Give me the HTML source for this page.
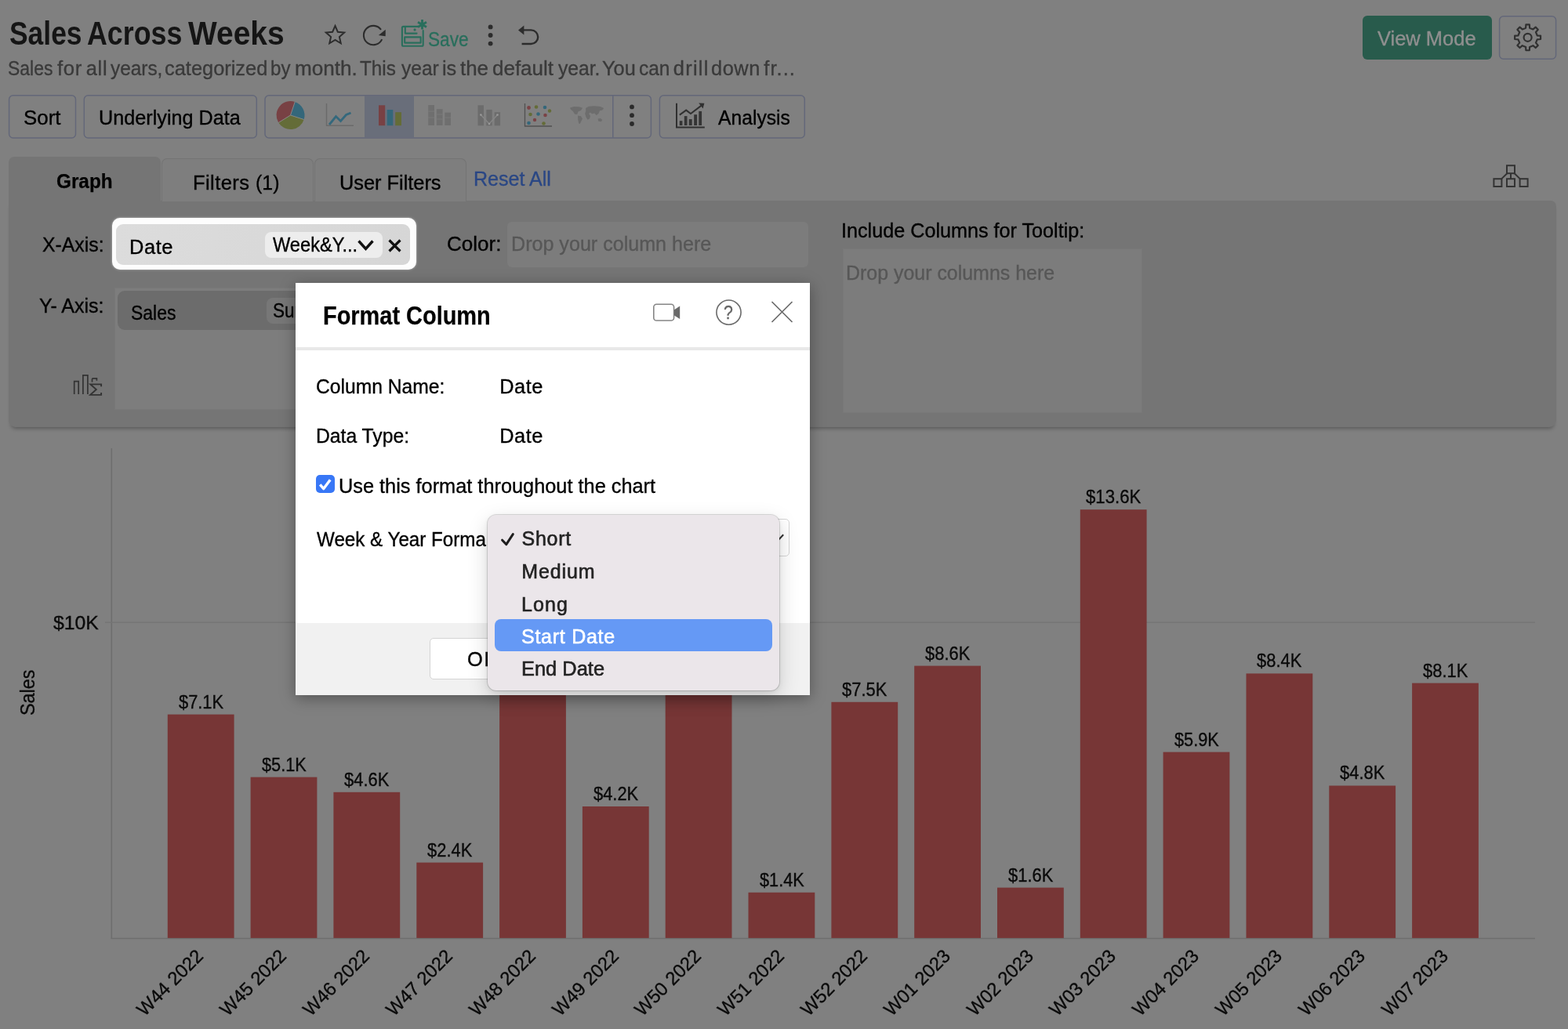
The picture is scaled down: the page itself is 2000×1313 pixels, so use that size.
<!DOCTYPE html>
<html lang="en"><head><meta charset="utf-8"><title>Sales Across Weeks</title>
<style>
*{box-sizing:border-box;margin:0;padding:0}
html,body{width:2000px;height:1313px;overflow:hidden;background:#808080}
body{position:relative;font-family:"Liberation Sans",sans-serif;color:#000}
.a{position:absolute}
.t{position:absolute;white-space:nowrap;line-height:normal;transform-origin:0 0}
svg{position:absolute;overflow:visible}
#root{position:absolute;left:0;top:0;width:2000px;height:1313px;will-change:transform}

</style></head>
<body>
<div id="root">
<div class="a" style="left:0;top:0"><div class="t" style="left:11.83px;top:19.00px;font-size:42px;transform:scaleX(0.8429);color:#151515;font-weight:700;">Sales</div> <div class="t" style="left:111.14px;top:19.00px;font-size:42px;transform:scaleX(0.8526);color:#151515;font-weight:700;">Across</div> <div class="t" style="left:240.02px;top:19.00px;font-size:42px;transform:scaleX(0.9265);color:#151515;font-weight:700;">Weeks</div></div>
<div class="a" style="left:0;top:0"><div class="t" style="left:10.40px;top:73.00px;font-size:25.4px;transform:scaleX(0.9028);color:#3a3a3a;-webkit-text-stroke:0.35px #3a3a3a;">Sales</div> <div class="t" style="left:73.45px;top:73.00px;font-size:25.4px;transform:scaleX(1.0141);color:#3a3a3a;letter-spacing:0.591px;-webkit-text-stroke:0.35px #3a3a3a;">for</div> <div class="t" style="left:109.71px;top:73.00px;font-size:25.4px;transform:scaleX(1.0000);color:#3a3a3a;letter-spacing:0.778px;-webkit-text-stroke:0.35px #3a3a3a;">all</div> <div class="t" style="left:141.24px;top:73.00px;font-size:25.4px;transform:scaleX(0.9595);color:#3a3a3a;-webkit-text-stroke:0.35px #3a3a3a;">years,</div> <div class="t" style="left:210.30px;top:73.00px;font-size:25.4px;transform:scaleX(1.0004);color:#3a3a3a;-webkit-text-stroke:0.35px #3a3a3a;">categorized</div> <div class="t" style="left:345.27px;top:73.00px;font-size:25.4px;transform:scaleX(0.9474);color:#3a3a3a;-webkit-text-stroke:0.35px #3a3a3a;">by</div> <div class="t" style="left:376.17px;top:73.00px;font-size:25.4px;transform:scaleX(1.0289);color:#3a3a3a;-webkit-text-stroke:0.35px #3a3a3a;">month.</div> <div class="t" style="left:459.41px;top:73.00px;font-size:25.4px;transform:scaleX(0.9569);color:#3a3a3a;-webkit-text-stroke:0.35px #3a3a3a;">This</div> <div class="t" style="left:511.70px;top:73.00px;font-size:25.4px;transform:scaleX(0.9658);color:#3a3a3a;-webkit-text-stroke:0.35px #3a3a3a;">year</div> <div class="t" style="left:563.80px;top:73.00px;font-size:25.4px;transform:scaleX(0.9939);color:#3a3a3a;-webkit-text-stroke:0.35px #3a3a3a;">is</div> <div class="t" style="left:587.00px;top:73.00px;font-size:25.4px;transform:scaleX(1.0210);color:#3a3a3a;-webkit-text-stroke:0.35px #3a3a3a;">the</div> <div class="t" style="left:627.89px;top:73.00px;font-size:25.4px;transform:scaleX(1.0231);color:#3a3a3a;-webkit-text-stroke:0.35px #3a3a3a;">default</div> <div class="t" style="left:711.62px;top:73.00px;font-size:25.4px;transform:scaleX(0.9710);color:#3a3a3a;-webkit-text-stroke:0.35px #3a3a3a;">year.</div> <div class="t" style="left:768.27px;top:73.00px;font-size:25.4px;transform:scaleX(0.9972);color:#3a3a3a;-webkit-text-stroke:0.35px #3a3a3a;">You</div> <div class="t" style="left:815.19px;top:73.00px;font-size:25.4px;transform:scaleX(0.9634);color:#3a3a3a;-webkit-text-stroke:0.35px #3a3a3a;">can</div> <div class="t" style="left:858.81px;top:73.00px;font-size:25.4px;transform:scaleX(1.0000);color:#3a3a3a;letter-spacing:1.264px;-webkit-text-stroke:0.35px #3a3a3a;">drill</div> <div class="t" style="left:906.91px;top:73.00px;font-size:25.4px;transform:scaleX(1.0000);color:#3a3a3a;letter-spacing:0.599px;-webkit-text-stroke:0.35px #3a3a3a;">down</div> <div class="t" style="left:974.36px;top:73.00px;font-size:25.4px;transform:scaleX(1.0000);color:#3a3a3a;letter-spacing:1.052px;-webkit-text-stroke:0.35px #3a3a3a;">fr...</div></div>
<svg style="left:408px;top:20px" width="290" height="50" viewBox="408 20 290 50" fill="none" stroke="#2c2c2c" stroke-width="2.1" stroke-linejoin="round" stroke-linecap="round">
<path d="M427.50 33.00 L430.85 40.69 L439.20 41.50 L432.92 47.06 L434.73 55.25 L427.50 51.00 L420.27 55.25 L422.08 47.06 L415.80 41.50 L424.15 40.69 Z" stroke-linejoin="miter" stroke-width="2"/>
<path d="M487.2 50.15 A12.2 12.2 0 1 1 486.0 37.9" stroke-linecap="butt"/>
<path d="M482.9 44.9 L491.8 37.8 L491.7 46.2 Z" fill="#2c2c2c" stroke="none"/>
<g stroke="#296e5c" stroke-width="2.1">
<path d="M533 33.9 H514.4 Q512.9 33.9 512.9 35.4 V57.2 Q512.9 58.7 514.4 58.7 H538.2 Q539.7 58.7 539.7 57.2 V39"/>
<path d="M516.8 34 V42.6 H531.6"/>
<rect x="516.2" y="47.4" width="20.4" height="7.2"/>
<path d="M528.3 37.2 h1.5 v1.5 h-1.5 z" fill="#296e5c" stroke-width="1.4"/>
<path d="M538.5 25 V37.6 M533 28.2 L544 34.4 M544 28.2 L533 34.4" stroke-width="2.9" stroke-linecap="butt"/>
</g>
<g fill="#2c2c2c" stroke="none"><circle cx="625.6" cy="34.4" r="2.95"/><circle cx="625.6" cy="45" r="2.95"/><circle cx="625.6" cy="55.6" r="2.95"/></g>
<path d="M667 38.4 H677.4 A8.8 8.8 0 0 1 677.4 56 H665.6" stroke-width="2.4" stroke-linecap="butt"/>
<path d="M661 38.4 L668.4 32.6 V44.4 Z" fill="#2c2c2c" stroke="none"/>
</svg>
<div class="t" style="left:546.29px;top:36.00px;font-size:25.4px;transform:scaleX(0.8917);color:#296e5c;-webkit-text-stroke:0.35px #296e5c;">Save</div>
<div class="a" style="left:1737.6px;top:20px;width:165px;height:55.7px;background:#285b4c;border-radius:6px"></div>
<div class="t" style="left:1757.03px;top:35.00px;font-size:25.4px;transform:scaleX(1.0035);color:#8f8f8f;-webkit-text-stroke:0.35px #8f8f8f;">View Mode</div>
<svg style="left:1925px;top:25px" width="48" height="46" viewBox="1925 25 48 46" fill="none" stroke="#303030" stroke-width="2.2" stroke-linejoin="round"><path d="M1946.09 35.66 L1946.39 31.35 L1950.81 31.35 L1951.11 35.66 L1955.41 37.44 L1958.67 34.60 L1961.80 37.73 L1958.96 40.99 L1960.74 45.29 L1965.05 45.59 L1965.05 50.01 L1960.74 50.31 L1958.96 54.61 L1961.80 57.87 L1958.67 61.00 L1955.41 58.16 L1951.11 59.94 L1950.81 64.25 L1946.39 64.25 L1946.09 59.94 L1941.79 58.16 L1938.53 61.00 L1935.40 57.87 L1938.24 54.61 L1936.46 50.31 L1932.15 50.01 L1932.15 45.59 L1936.46 45.29 L1938.24 40.99 L1935.40 37.73 L1938.53 34.60 L1941.79 37.44 Z"/><circle cx="1948.6" cy="47.8" r="5"/></svg>
<svg style="left:1900px;top:205px" width="56" height="40" viewBox="1900 205 56 40" fill="none" stroke="#333" stroke-width="2">
<rect x="1922" y="211.2" width="10" height="10"/><rect x="1905.4" y="228.2" width="10" height="9.8"/><rect x="1922" y="228.2" width="10" height="9.8"/><rect x="1938.6" y="228.2" width="10" height="9.8"/>
<path d="M1927 221.2 V228 M1922.6 221 L1915 228.4 M1931.4 221 L1939 228.4"/></svg>
<svg style="left:0;top:0" width="2000" height="200" viewBox="0 0 2000 200"><rect x="465" y="122.4" width="63" height="52.8" fill="#696e7a"/><rect x="11.6" y="121.7" width="84.90" height="54.20" rx="5" fill="none" stroke="#636779" stroke-width="1.5"/><rect x="107.3" y="121.7" width="220.00" height="54.20" rx="5" fill="none" stroke="#636779" stroke-width="1.5"/><rect x="338.0" y="121.7" width="492.40" height="54.20" rx="5" fill="none" stroke="#636779" stroke-width="1.5"/><path d="M781.8 122 V175.6" stroke="#636779" stroke-width="1.5" fill="none"/><rect x="841.4" y="121.7" width="184.90" height="54.20" rx="5" fill="none" stroke="#636779" stroke-width="1.5"/><rect x="1912.6" y="20.7" width="72.00" height="54.50" rx="5" fill="none" stroke="#636779" stroke-width="1.5"/></svg>
<div class="t" style="left:30.30px;top:136.00px;font-size:25.4px;transform:scaleX(1.0188);color:#000;-webkit-text-stroke:0.35px #000;">Sort</div>
<div class="t" style="left:125.92px;top:136.00px;font-size:25.4px;transform:scaleX(0.9933);color:#000;-webkit-text-stroke:0.35px #000;">Underlying Data</div>
<div class="t" style="left:915.72px;top:136.00px;font-size:25.4px;transform:scaleX(0.9721);color:#000;-webkit-text-stroke:0.35px #000;">Analysis</div>
<svg style="left:345px;top:125px" width="480" height="48" viewBox="345 125 480 48">
<g>
<path d="M370.5 147 L376.2 130 A18 18 0 0 1 387.7 152.5 Z" fill="#34677a"/>
<path d="M370.5 147 L387.7 152.5 A18 18 0 0 1 355.2 156.5 Z" fill="#646c38"/>
<path d="M370.5 147 L355.2 156.5 A18 18 0 0 1 376.2 130 Z" fill="#784144"/>
<path d="M370.5 147 L376.2 130 M370.5 147 L387.7 152.5 M370.5 147 L355.2 156.5" stroke="#8a8a8a" stroke-width="0.9"/>
</g>
<path d="M416.5 132 V160.3 H451" fill="none" stroke="#6a6a6a" stroke-width="1.4"/>
<path d="M420 159 L428.5 148.5 L434.5 154.5 L441.5 146.5 L447.5 144" fill="none" stroke="#34687c" stroke-width="2.8" stroke-linejoin="miter"/>
<rect x="483" y="134.3" width="8.2" height="25.9" fill="#784144"/><rect x="493.7" y="140" width="7.6" height="20.2" fill="#34677a"/><rect x="504.2" y="143.2" width="7.8" height="17" fill="#646c38"/>
<g fill="#6f6f6f">
<rect x="546.2" y="134" width="7.8" height="26"/><rect x="556.8" y="139.2" width="7.8" height="20.8"/><rect x="567.2" y="143.6" width="7.8" height="16.4"/>
</g><g fill="#6c6c6c">
<rect x="609.5" y="134.3" width="7.5" height="26"/><rect x="620.3" y="139.9" width="7.4" height="20.4"/><rect x="630.7" y="143.2" width="7.4" height="17.1"/>
</g>
<g stroke="#7a7a7a" stroke-width="1"><path d="M546.2 142 h7.8 M546.2 150 h7.8 M556.8 146 h7.8 M556.8 152 h7.8 M567.2 150 h7.8" fill="none"/></g>
<path d="M613.3 146.5 L624 158 L634.5 146.5" fill="none" stroke="#868686" stroke-width="1.5"/>
<g fill="#9a9a9a"><circle cx="613.3" cy="146.5" r="1.3"/><circle cx="624" cy="158" r="1.3"/><circle cx="634.5" cy="146.5" r="1.3"/></g>
<path d="M669.5 132 V161 H704" fill="none" stroke="#505050" stroke-width="1.3"/>
<g>
<circle cx="674.5" cy="137.5" r="2.4" fill="#7a4346"/><circle cx="684" cy="136.5" r="2.3" fill="#646c38"/><circle cx="695" cy="137" r="2.3" fill="#34677a"/>
<circle cx="701" cy="141.5" r="2.2" fill="#646c38"/><circle cx="676.5" cy="146" r="2.3" fill="#646c38"/><circle cx="686.5" cy="145.5" r="2.3" fill="#34677a"/>
<circle cx="695.5" cy="147" r="2.3" fill="#7a4346"/><circle cx="682" cy="153" r="2.2" fill="#7a4346"/><circle cx="674.5" cy="157" r="2.3" fill="#34677a"/>
<circle cx="693.5" cy="157.5" r="2.3" fill="#646c38"/>
</g>
<g fill="#6d6d6d">
<path d="M727 137.5 l5 -1.6 l6.5 0.4 l4.5 1.5 l-1.8 3 l-3.8 1.6 l-1.2 3.6 l-3 -0.2 l-2.4 -3.8 l-2.8 -2.2 z"/>
<path d="M737 147.5 l4 0.8 l2 3.2 l-1.6 3.2 l-1.6 3.2 l-1.6 -0.4 l-1 -5 z"/>
<path d="M747 138 l4 -2.2 l7 -0.6 l8 0.8 l4.2 2 l-1.8 2.6 l-3.4 0.6 l-1.4 3.6 l-3 2.4 l-2.2 -2.6 l-3.2 0.6 l-2.6 -1.8 l-1.4 1.6 l1.8 3 l-1 3.6 l-2.6 1.2 l-2 -3.6 l-1.2 -4.2 l1 -3.6 z"/>
<path d="M762.5 151.5 l3.6 -0.6 l2.2 2.2 l-1.6 2.2 l-3.4 -0.6 z"/>
</g>
<g fill="#2a2a2a"><circle cx="806" cy="136.4" r="2.9"/><circle cx="806" cy="147.2" r="2.9"/><circle cx="806" cy="158" r="2.9"/></g>
<g fill="none" stroke="#303030" stroke-width="2">
<path d="M863 131.8 V162.6 H898.8"/>
<path d="M866.8 146.6 L875.2 140.6 L881 145 L895 134.4"/>
</g>
<path d="M891.2 131.6 L898.4 131.8 L896.6 138.6 Z" fill="#303030"/>
<g fill="#343434"><rect x="866.8" y="154.2" width="3.6" height="5.8"/><rect x="872.8" y="148.1" width="3.7" height="11.9"/><rect x="878.8" y="152.1" width="3.9" height="7.9"/><rect x="885.2" y="146.2" width="3.9" height="13.8"/><rect x="891.3" y="141.9" width="3.8" height="18.1"/></g>
</svg>
<div class="a" style="left:11px;top:256.3px;width:1974.2px;height:288.7px;background:#757575;border-radius:0 7px 9px 9px;box-shadow:0 5px 5px -3px rgba(0,0,0,.3)"></div>
<div class="a" style="left:11px;top:200px;width:194px;height:60px;background:#757575;border-radius:7px 7px 0 0"></div>
<div class="a" style="left:206px;top:202px;width:193.5px;height:54.5px;background:#7e7e7e;border:1.5px solid #737373;border-bottom:none;border-radius:7px 7px 0 0"></div>
<div class="a" style="left:400.5px;top:202px;width:194px;height:54.5px;background:#7e7e7e;border:1.5px solid #737373;border-bottom:none;border-radius:7px 7px 0 0"></div>
<div class="t" style="left:72.30px;top:216.00px;font-size:26px;transform:scaleX(0.9350);color:#000;font-weight:700;-webkit-text-stroke:0.25px #000;">Graph</div>
<div class="a" style="left:0;top:0"><div class="t" style="left:245.94px;top:219.00px;font-size:25.4px;transform:scaleX(1.0016);color:#000;letter-spacing:0.439px;-webkit-text-stroke:0.35px #000;">Filters</div> <div class="t" style="left:325.98px;top:219.00px;font-size:25.4px;transform:scaleX(0.9806);color:#000;-webkit-text-stroke:0.35px #000;">(1)</div></div>
<div class="t" style="left:432.72px;top:219.00px;font-size:25.4px;transform:scaleX(0.9981);color:#000;-webkit-text-stroke:0.35px #000;">User Filters</div>
<div class="t" style="left:603.76px;top:214.00px;font-size:25.4px;transform:scaleX(0.9864);color:#2a4784;-webkit-text-stroke:0.35px #2a4784;">Reset All</div>
<div class="t" style="left:53.92px;top:298.00px;font-size:25.4px;transform:scaleX(0.9765);color:#000;-webkit-text-stroke:0.35px #000;">X-Axis:</div>
<div class="a" style="left:143px;top:278.3px;width:388.3px;height:66px;background:#fdfdfd;border-radius:10px;box-shadow:0 0 3px rgba(255,255,255,.5)"></div>
<div class="a" style="left:148.3px;top:286.4px;width:374.4px;height:51.2px;background:linear-gradient(100deg,#dcdcdc,#d6d6d6);border-radius:9px"></div>
<div class="a" style="left:338px;top:296px;width:150px;height:32.5px;background:#ededed;border-radius:8px"></div>
<div class="t" style="left:165.33px;top:301.00px;font-size:25.4px;transform:scaleX(1.0027);color:#000;letter-spacing:0.554px;-webkit-text-stroke:0.35px #000;">Date</div>
<div class="t" style="left:348.00px;top:298.00px;font-size:25.4px;transform:scaleX(0.9302);color:#000;-webkit-text-stroke:0.35px #000;">Week&amp;Y...</div>
<svg style="left:455px;top:300px" width="70" height="28" viewBox="455 300 70 28" fill="none" stroke="#111" stroke-width="3.4"><path d="M457.5 307.5 L466.5 317.5 L475.5 307.5"/><path d="M496.5 306.5 L510.5 320.5 M510.5 306.5 L496.5 320.5" stroke-width="3.2"/></svg>
<div class="t" style="left:569.94px;top:297.00px;font-size:25.4px;transform:scaleX(1.0257);color:#000;-webkit-text-stroke:0.35px #000;">Color:</div>
<div class="a" style="left:647px;top:283px;width:383.5px;height:58px;background:#7c7c7c;border-radius:6px"></div>
<div class="t" style="left:651.64px;top:297.00px;font-size:25.4px;transform:scaleX(0.9885);color:#575757;-webkit-text-stroke:0.35px #575757;">Drop your column here</div>
<div class="t" style="left:1072.88px;top:280.00px;font-size:25.4px;transform:scaleX(0.9918);color:#000;-webkit-text-stroke:0.35px #000;">Include Columns for Tooltip:</div>
<div class="a" style="left:1075px;top:317px;width:382px;height:210px;background:#7c7c7c;border:1px solid #787878"></div>
<div class="t" style="left:1079.05px;top:334.00px;font-size:25.4px;transform:scaleX(0.9819);color:#575757;-webkit-text-stroke:0.35px #575757;">Drop your columns here</div>
<div class="t" style="left:49.98px;top:376.00px;font-size:25.4px;transform:scaleX(0.9848);color:#000;-webkit-text-stroke:0.35px #000;">Y- Axis:</div>
<div class="a" style="left:146px;top:367px;width:884px;height:155.5px;background:#7d7d7d;border:1px solid #787878"></div>
<div class="a" style="left:150px;top:370.5px;width:377px;height:50.5px;background:#6c6c6c;border-radius:9px"></div>
<div class="a" style="left:340px;top:380px;width:150px;height:32.5px;background:#777;border-radius:8px"></div>
<div class="t" style="left:167.27px;top:385.00px;font-size:25.4px;transform:scaleX(0.9042);color:#000;-webkit-text-stroke:0.35px #000;">Sales</div>
<div class="t" style="left:348.19px;top:381.00px;font-size:26px;transform:scaleX(0.8665);color:#000;-webkit-text-stroke:0.35px #000;">Sum</div>
<svg style="left:90px;top:474px" width="44" height="36" viewBox="90 474 44 36" fill="none" stroke="#333" stroke-width="1.7">
<path d="M94.7 503 V486.7 H100.2 V503"/><path d="M105.9 503 V478.8 H111.9 V503"/>
<path d="M117.5 487.6 V484 Q117.5 482.9 118.6 482.9 H123.4 V485.8"/>
<path d="M129.1 493.2 V490.4 H115.4 L122.8 497 L115.2 503.9 H129.1 V501" stroke-width="1.9"/></svg><svg style="left:0;top:560px" width="2000" height="753" viewBox="0 560 2000 753">
<g stroke="#6e6e6e" stroke-width="1.6" fill="none"><path d="M142.3 572 V1197.4"/><path d="M141.5 1197.5 H1958"/></g>
<path d="M134 794.2 H1958" stroke="#757575" stroke-width="1.4" fill="none"/>
<rect x="213.8" y="911.6" width="84.8" height="285.3" fill="#773636"/>
<rect x="319.6" y="991.6" width="84.8" height="205.3" fill="#773636"/>
<rect x="425.4" y="1010.8" width="84.8" height="186.1" fill="#773636"/>
<rect x="531.3" y="1100.6" width="84.8" height="96.3" fill="#773636"/>
<rect x="637.1" y="803.0" width="84.8" height="393.9" fill="#773636"/>
<rect x="742.9" y="1029.0" width="84.8" height="167.9" fill="#773636"/>
<rect x="848.7" y="819.0" width="84.8" height="377.9" fill="#773636"/>
<rect x="954.5" y="1138.8" width="84.8" height="58.1" fill="#773636"/>
<rect x="1060.4" y="895.8" width="84.8" height="301.1" fill="#773636"/>
<rect x="1166.2" y="849.6" width="84.8" height="347.3" fill="#773636"/>
<rect x="1272.0" y="1132.6" width="84.8" height="64.3" fill="#773636"/>
<rect x="1377.8" y="650.2" width="84.8" height="546.7" fill="#773636"/>
<rect x="1483.6" y="959.6" width="84.8" height="237.3" fill="#773636"/>
<rect x="1589.5" y="859.4" width="84.8" height="337.5" fill="#773636"/>
<rect x="1695.3" y="1002.5" width="84.8" height="194.4" fill="#773636"/>
<rect x="1801.1" y="871.6" width="84.8" height="325.3" fill="#773636"/>
</svg>
<div class="t" style="left:228.03px;top:882.00px;font-size:24px;transform:scaleX(0.9100);color:#0a0a0a;-webkit-text-stroke:0.35px #0a0a0a;">$7.1K</div>
<div class="t" style="left:333.97px;top:962.00px;font-size:24px;transform:scaleX(0.9046);color:#0a0a0a;-webkit-text-stroke:0.35px #0a0a0a;">$5.1K</div>
<div class="t" style="left:439.37px;top:981.00px;font-size:24px;transform:scaleX(0.9135);color:#0a0a0a;-webkit-text-stroke:0.35px #0a0a0a;">$4.6K</div>
<div class="t" style="left:545.01px;top:1071.00px;font-size:24px;transform:scaleX(0.9133);color:#0a0a0a;-webkit-text-stroke:0.35px #0a0a0a;">$2.4K</div>
<div class="t" style="left:757.15px;top:999.00px;font-size:24px;transform:scaleX(0.9119);color:#0a0a0a;-webkit-text-stroke:0.35px #0a0a0a;">$4.2K</div>
<div class="t" style="left:968.89px;top:1109.00px;font-size:24px;transform:scaleX(0.9046);color:#0a0a0a;-webkit-text-stroke:0.35px #0a0a0a;">$1.4K</div>
<div class="t" style="left:1074.12px;top:866.00px;font-size:24px;transform:scaleX(0.9135);color:#0a0a0a;-webkit-text-stroke:0.35px #0a0a0a;">$7.5K</div>
<div class="t" style="left:1180.26px;top:820.00px;font-size:24px;transform:scaleX(0.9135);color:#0a0a0a;-webkit-text-stroke:0.35px #0a0a0a;">$8.6K</div>
<div class="t" style="left:1286.40px;top:1103.00px;font-size:24px;transform:scaleX(0.9135);color:#0a0a0a;-webkit-text-stroke:0.35px #0a0a0a;">$1.6K</div>
<div class="t" style="left:1385.45px;top:620.00px;font-size:24px;transform:scaleX(0.9241);color:#0a0a0a;-webkit-text-stroke:0.35px #0a0a0a;">$13.6K</div>
<div class="t" style="left:1497.99px;top:930.00px;font-size:24px;transform:scaleX(0.9046);color:#0a0a0a;-webkit-text-stroke:0.35px #0a0a0a;">$5.9K</div>
<div class="t" style="left:1603.43px;top:829.00px;font-size:24px;transform:scaleX(0.9135);color:#0a0a0a;-webkit-text-stroke:0.35px #0a0a0a;">$8.4K</div>
<div class="t" style="left:1709.08px;top:972.00px;font-size:24px;transform:scaleX(0.9133);color:#0a0a0a;-webkit-text-stroke:0.35px #0a0a0a;">$4.8K</div>
<div class="t" style="left:1815.01px;top:842.00px;font-size:24px;transform:scaleX(0.9135);color:#0a0a0a;-webkit-text-stroke:0.35px #0a0a0a;">$8.1K</div>
<div class="t" style="left:68.24px;top:781.00px;font-size:24px;transform:scaleX(1.0309);color:#0a0a0a;-webkit-text-stroke:0.35px #0a0a0a;">$10K</div>
<div class="a" style="left:34.2px;top:884px;width:0;height:0;transform:rotate(-90deg)"><div class="t" style="left:-29.23px;top:-14.00px;font-size:26px;transform:scaleX(0.8989);color:#0a0a0a;-webkit-text-stroke:0.35px #0a0a0a;">Sales</div></div>
<div class="a" style="left:260.4px;top:1221.6px;width:0;height:0;transform:rotate(-45deg)"><div class="t" style="left:-107.00px;top:-22.00px;font-size:24px;transform:scaleX(0.9868);color:#0a0a0a;-webkit-text-stroke:0.35px #0a0a0a;">W44 2022</div></div>
<div class="a" style="left:366.2px;top:1221.6px;width:0;height:0;transform:rotate(-45deg)"><div class="t" style="left:-107.00px;top:-22.00px;font-size:24px;transform:scaleX(0.9868);color:#0a0a0a;-webkit-text-stroke:0.35px #0a0a0a;">W45 2022</div></div>
<div class="a" style="left:472.0px;top:1221.6px;width:0;height:0;transform:rotate(-45deg)"><div class="t" style="left:-107.00px;top:-22.00px;font-size:24px;transform:scaleX(0.9868);color:#0a0a0a;-webkit-text-stroke:0.35px #0a0a0a;">W46 2022</div></div>
<div class="a" style="left:577.9px;top:1221.6px;width:0;height:0;transform:rotate(-45deg)"><div class="t" style="left:-107.00px;top:-22.00px;font-size:24px;transform:scaleX(0.9868);color:#0a0a0a;-webkit-text-stroke:0.35px #0a0a0a;">W47 2022</div></div>
<div class="a" style="left:683.7px;top:1221.6px;width:0;height:0;transform:rotate(-45deg)"><div class="t" style="left:-107.00px;top:-22.00px;font-size:24px;transform:scaleX(0.9868);color:#0a0a0a;-webkit-text-stroke:0.35px #0a0a0a;">W48 2022</div></div>
<div class="a" style="left:789.5px;top:1221.6px;width:0;height:0;transform:rotate(-45deg)"><div class="t" style="left:-107.00px;top:-22.00px;font-size:24px;transform:scaleX(0.9868);color:#0a0a0a;-webkit-text-stroke:0.35px #0a0a0a;">W49 2022</div></div>
<div class="a" style="left:895.3px;top:1221.6px;width:0;height:0;transform:rotate(-45deg)"><div class="t" style="left:-107.00px;top:-22.00px;font-size:24px;transform:scaleX(0.9868);color:#0a0a0a;-webkit-text-stroke:0.35px #0a0a0a;">W50 2022</div></div>
<div class="a" style="left:1001.1px;top:1221.6px;width:0;height:0;transform:rotate(-45deg)"><div class="t" style="left:-107.00px;top:-22.00px;font-size:24px;transform:scaleX(0.9868);color:#0a0a0a;-webkit-text-stroke:0.35px #0a0a0a;">W51 2022</div></div>
<div class="a" style="left:1107.0px;top:1221.6px;width:0;height:0;transform:rotate(-45deg)"><div class="t" style="left:-107.00px;top:-22.00px;font-size:24px;transform:scaleX(0.9868);color:#0a0a0a;-webkit-text-stroke:0.35px #0a0a0a;">W52 2022</div></div>
<div class="a" style="left:1212.8px;top:1221.6px;width:0;height:0;transform:rotate(-45deg)"><div class="t" style="left:-107.00px;top:-22.00px;font-size:24px;transform:scaleX(0.9868);color:#0a0a0a;-webkit-text-stroke:0.35px #0a0a0a;">W01 2023</div></div>
<div class="a" style="left:1318.6px;top:1221.6px;width:0;height:0;transform:rotate(-45deg)"><div class="t" style="left:-107.00px;top:-22.00px;font-size:24px;transform:scaleX(0.9868);color:#0a0a0a;-webkit-text-stroke:0.35px #0a0a0a;">W02 2023</div></div>
<div class="a" style="left:1424.4px;top:1221.6px;width:0;height:0;transform:rotate(-45deg)"><div class="t" style="left:-107.00px;top:-22.00px;font-size:24px;transform:scaleX(0.9868);color:#0a0a0a;-webkit-text-stroke:0.35px #0a0a0a;">W03 2023</div></div>
<div class="a" style="left:1530.2px;top:1221.6px;width:0;height:0;transform:rotate(-45deg)"><div class="t" style="left:-107.00px;top:-22.00px;font-size:24px;transform:scaleX(0.9868);color:#0a0a0a;-webkit-text-stroke:0.35px #0a0a0a;">W04 2023</div></div>
<div class="a" style="left:1636.1px;top:1221.6px;width:0;height:0;transform:rotate(-45deg)"><div class="t" style="left:-107.00px;top:-22.00px;font-size:24px;transform:scaleX(0.9868);color:#0a0a0a;-webkit-text-stroke:0.35px #0a0a0a;">W05 2023</div></div>
<div class="a" style="left:1741.9px;top:1221.6px;width:0;height:0;transform:rotate(-45deg)"><div class="t" style="left:-107.00px;top:-22.00px;font-size:24px;transform:scaleX(0.9868);color:#0a0a0a;-webkit-text-stroke:0.35px #0a0a0a;">W06 2023</div></div>
<div class="a" style="left:1847.7px;top:1221.6px;width:0;height:0;transform:rotate(-45deg)"><div class="t" style="left:-107.00px;top:-22.00px;font-size:24px;transform:scaleX(0.9868);color:#0a0a0a;-webkit-text-stroke:0.35px #0a0a0a;">W07 2023</div></div><div class="a" style="left:377px;top:361px;width:656.3px;height:526px;background:#fff;box-shadow:0 4px 18px rgba(0,0,0,.35);overflow:hidden">
<div class="a" style="left:0;top:82.4px;width:100%;height:3.6px;background:#e8e8e8"></div>
<div class="a" style="left:0;top:434px;width:100%;height:92px;background:#f1f1f1"></div>
<div class="a" style="left:171px;top:453px;width:150px;height:52.5px;background:#fff;border:1.5px solid #d4d4d4;border-radius:5px"></div>
<div class="a" style="left:260px;top:301px;width:370px;height:48.2px;background:#fff;border:1.5px solid #d6d6d6;border-radius:5px"></div>
</div>
<div class="t" style="left:411.85px;top:384.00px;font-size:33px;transform:scaleX(0.8767);color:#000;font-weight:700;-webkit-text-stroke:0.25px #000;">Format Column</div>
<svg style="left:825px;top:375px" width="200" height="50" viewBox="825 375 200 50" fill="none" stroke="#5a5a5a" stroke-width="1.6">
<rect x="833.8" y="388.2" width="25.8" height="20.8" rx="3.6" stroke="#858585"/>
<path d="M860 395.2 L867.2 390.6 V407 L860 402.4 Z" fill="#6a6a6a" stroke="none"/>
<circle cx="929.5" cy="398.6" r="15.6" stroke="#6a6a6a"/>
<path d="M984.5 385 L1010.5 411 M1010.5 385 L984.5 411" stroke="#6a6a6a" stroke-width="1.7"/>
</svg>
<div class="t" style="left:923.43px;top:386.00px;font-size:23px;transform:scaleX(0.9286);color:#666;-webkit-text-stroke:0.35px #666;">?</div>
<div class="t" style="left:403.25px;top:479.00px;font-size:25.4px;transform:scaleX(0.9707);color:#000;-webkit-text-stroke:0.35px #000;">Column Name:</div>
<div class="t" style="left:637.22px;top:479.00px;font-size:25.4px;transform:scaleX(1.0000);color:#000;letter-spacing:0.520px;-webkit-text-stroke:0.35px #000;">Date</div>
<div class="t" style="left:402.81px;top:542.00px;font-size:25.4px;transform:scaleX(0.9730);color:#000;-webkit-text-stroke:0.35px #000;">Data Type:</div>
<div class="t" style="left:637.22px;top:542.00px;font-size:25.4px;transform:scaleX(1.0000);color:#000;letter-spacing:0.520px;-webkit-text-stroke:0.35px #000;">Date</div>
<div class="a" style="left:403px;top:606.2px;width:23.5px;height:23.3px;background:#3877f6;border-radius:5px"></div>
<svg style="left:403px;top:606px" width="24" height="24" viewBox="0 0 24 24" fill="none" stroke="#fff" stroke-width="3.4" stroke-linejoin="round"><path d="M5.2 12.4 L9.8 17.6 L18.2 6.2"/></svg>
<div class="t" style="left:431.74px;top:606.00px;font-size:25.4px;transform:scaleX(0.9976);color:#000;-webkit-text-stroke:0.35px #000;">Use this format throughout the chart</div>
<div class="t" style="left:404.17px;top:674.00px;font-size:25.4px;transform:scaleX(0.9521);color:#000;-webkit-text-stroke:0.35px #000;">Week &amp; Year Forma<span style="margin-left:5px">t:</span></div>
<div class="t" style="left:595.93px;top:827.00px;font-size:25.4px;transform:scaleX(1.0022);color:#000;letter-spacing:1.765px;-webkit-text-stroke:0.35px #000;">OK</div>
<svg style="left:990px;top:676px" width="16" height="16" viewBox="990 676 16 16" fill="none" stroke="#333" stroke-width="2"><path d="M986 682.2 L992.6 689.2 L999.2 682.2"/></svg>
<div class="a" style="left:621.8px;top:656.9px;width:371.8px;height:224.1px;background:#ebe6ea;border-radius:11px;box-shadow:0 0 0 1px rgba(0,0,0,.13),0 9px 26px rgba(0,0,0,.17),0 2px 6px rgba(0,0,0,.08)"></div>
<div class="a" style="left:631px;top:790px;width:354px;height:41.2px;background:#6599f5;border-radius:8px"></div>
<svg style="left:636px;top:676px" width="24" height="24" viewBox="636 676 24 24" fill="none" stroke="#1e1e1e" stroke-width="3" stroke-linejoin="round" stroke-linecap="round"><path d="M640.6 689.2 L645.8 694.6 L654.3 681.6"/></svg>
<div class="t" style="left:665.62px;top:673.00px;font-size:25px;transform:scaleX(1.0000);color:#232323;letter-spacing:0.686px;-webkit-text-stroke:0.6px #232323;">Short</div>
<div class="t" style="left:665.25px;top:715.00px;font-size:25px;transform:scaleX(1.0000);color:#232323;letter-spacing:0.906px;-webkit-text-stroke:0.6px #232323;">Medium</div>
<div class="t" style="left:665.05px;top:757.00px;font-size:25px;transform:scaleX(1.0000);color:#232323;letter-spacing:1.081px;-webkit-text-stroke:0.6px #232323;">Long</div>
<div class="t" style="left:665.25px;top:798.00px;font-size:25px;transform:scaleX(1.0016);color:#fff;letter-spacing:0.716px;-webkit-text-stroke:0.6px #fff;">Start Date</div>
<div class="t" style="left:665.16px;top:839.00px;font-size:25px;transform:scaleX(1.0175);color:#232323;-webkit-text-stroke:0.6px #232323;">End Date</div>
</div>
</body></html>
